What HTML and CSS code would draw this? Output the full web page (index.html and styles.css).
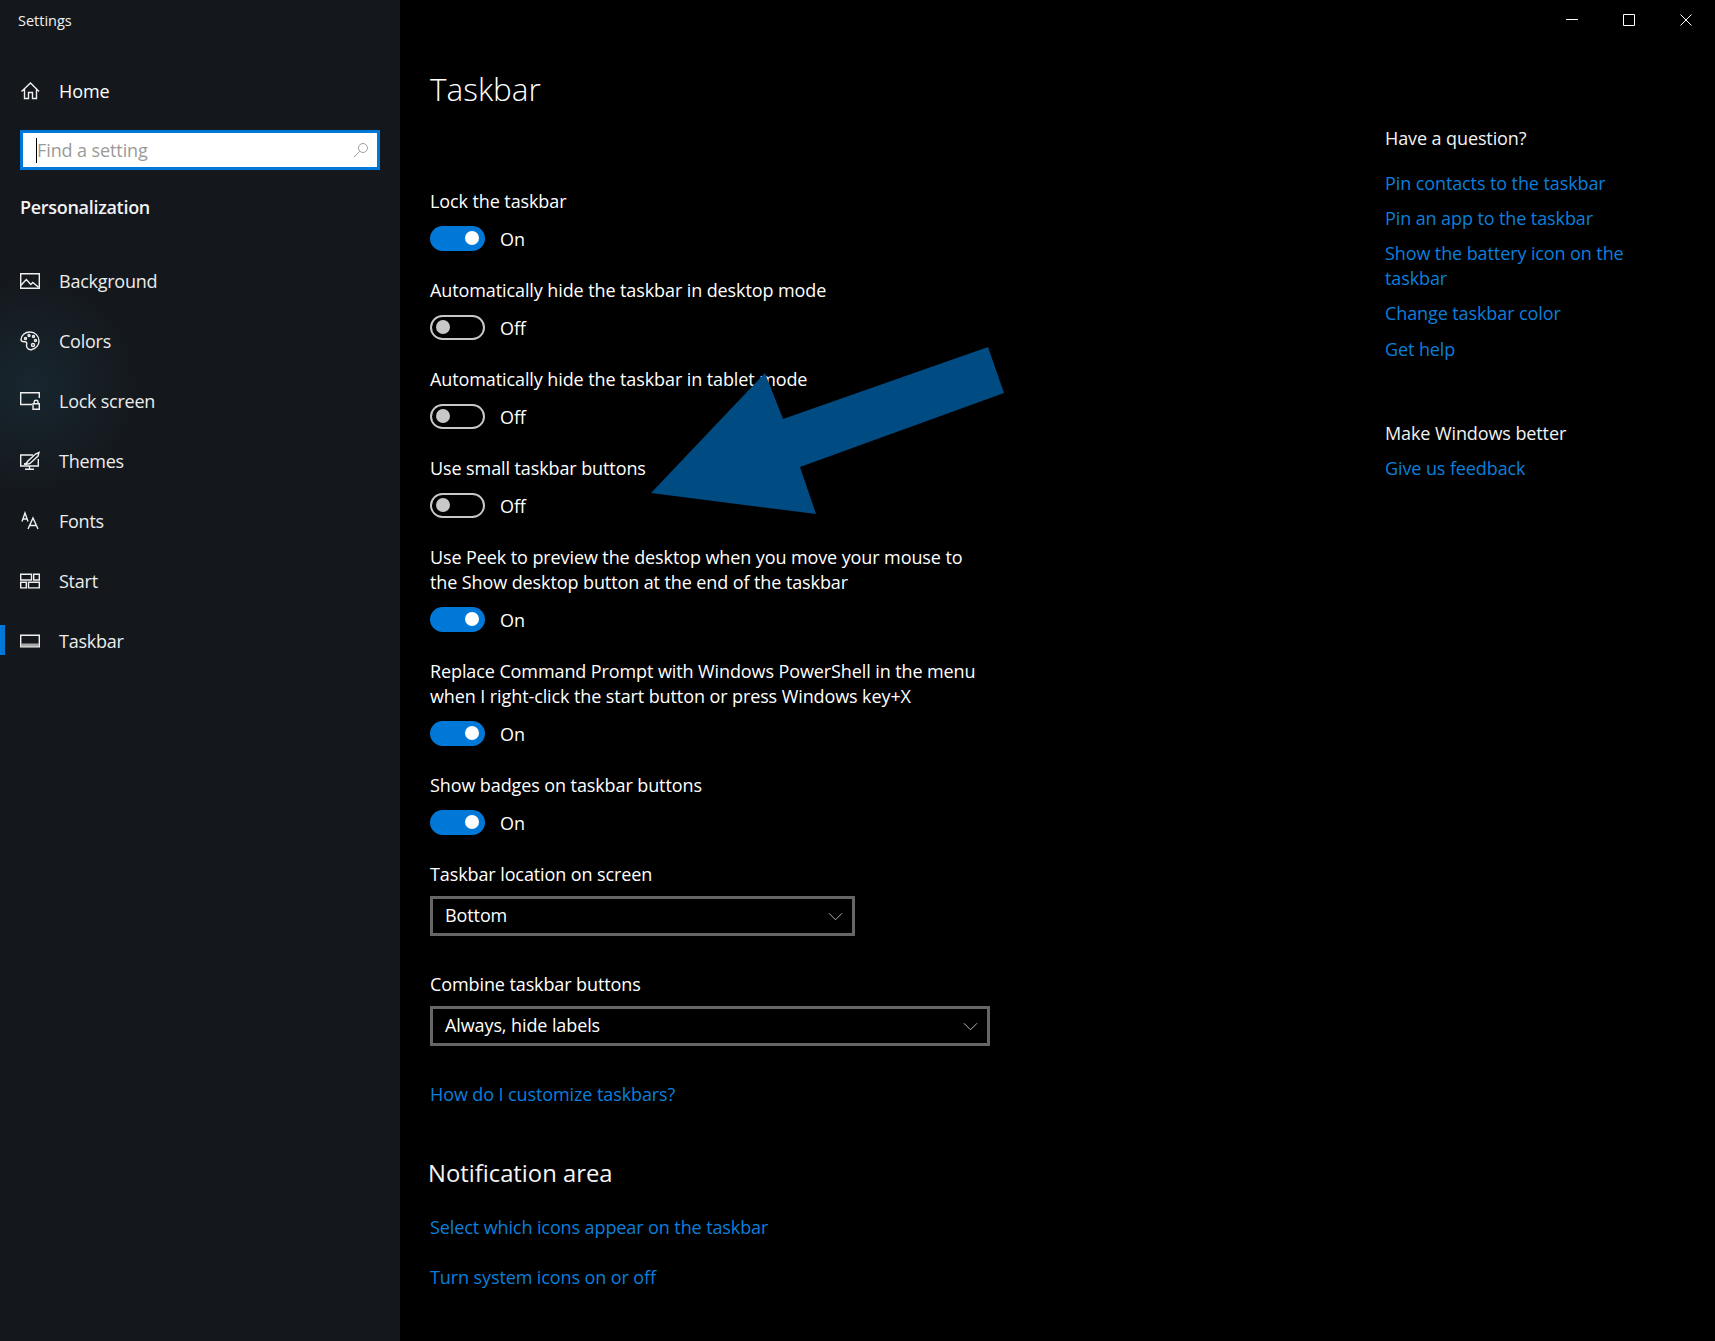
FILE: index.html
```html
<!DOCTYPE html>
<html lang="en">
<head>
<meta charset="utf-8">
<title>Settings</title>
<link rel="stylesheet" href="styles.css">
</head>
<body>
<div class="app">
  <aside class="sidebar">
    <div class="app-title">Settings</div>
    <a class="home">
      <svg class="icon" viewBox="0 0 20 20"><path d="M1.500 10.500 10.500 2l8.500 8.500M4.500 8v9.500h4v-6h4v6h4V8"/></svg>
      <span>Home</span>
    </a>
    <div class="search">
      <span class="caret"></span><span class="placeholder">Find a setting</span>
      <svg class="search-icon" viewBox="0 0 16 16"><circle cx="10" cy="6" r="4.500"/><path d="M6.800 9.200 1 15"/></svg>
    </div>
    <div class="section">Personalization</div>
    <nav class="nav">
      <a class="nav-item">
        <svg class="icon" viewBox="0 0 20 16"><path d="M.7.700h18.600v14.600H.7zM.8 12.500l5.500-6 4.500 5 2-2 5.500 4.500M13.500 4.500h.1"/></svg>
        <span>Background</span>
      </a>
      <a class="nav-item">
        <svg class="icon" viewBox="0 0 20 20"><path d="M10 1C5 1 1 4.500 1 8.500c0 3 3.500 2 5 2.500 2 .7-.5 3 1 5.500 1 2 3 2.500 5 2 4-1 7-4.500 7-8.500C19 5 15 1 10 1z"/><circle cx="5.500" cy="7.500" r="1"/><circle cx="9" cy="4.500" r="1"/><circle cx="13.500" cy="5.500" r="1"/><circle cx="15.500" cy="9.500" r="1"/><circle cx="13" cy="14" r="1.500"/></svg>
        <span>Colors</span>
      </a>
      <a class="nav-item">
        <svg class="icon" viewBox="0 0 20 18"><path d="M12 12.500H.7V.7h18.600V6M13 17.300h6.300v-5.500H13zM14.200 11.800V9.800c0-2 3.800-2 3.800 0v2"/></svg>
        <span>Lock screen</span>
      </a>
      <a class="nav-item">
        <svg class="icon" viewBox="0 0 20 18"><path d="M13 3H.7v11h17.600V7M9.500 14v3M5 17.300h9"/><path d="M4 12c2.500 0 3-1 3.500-2.500L15.500 2 19 .5 18 4l-8 7.500C8.500 12 6 12.500 4 12z"/></svg>
        <span>Themes</span>
      </a>
      <a class="nav-item">
        <svg class="icon" viewBox="0 0 20 18"><path d="M2 9.500 5 1l3 8.500M3 7h4M8 17 13 6l5 11M9.700 13.500h6.600"/></svg>
        <span>Fonts</span>
      </a>
      <a class="nav-item">
        <svg class="icon" viewBox="0 0 20 15"><path d="M.7.700h10.800v5.800H.7zM13.700.700h5.600v5.800h-5.600zM.7 8.800h5.600v5.600H.7zM8.500 8.800h10.800v5.600H8.500z"/></svg>
        <span>Start</span>
      </a>
      <a class="nav-item active">
        <svg class="icon" viewBox="0 0 20 13"><path d="M.7.700h18.600v11.600H.7z"/><path class="thick" d="M1 10.500h18"/></svg>
        <span>Taskbar</span>
      </a>
    </nav>
  </aside>

  <main class="main">
    <div class="window-controls">
      <svg viewBox="0 0 12 12"><path d="M0 5.500h12"/></svg>
      <svg viewBox="0 0 12 12"><path d="M.5.500h11v11H.5z"/></svg>
      <svg viewBox="0 0 12 12"><path d="M.5.500l11 11M11.500.500l-11 11"/></svg>
    </div>
    <div class="columns">
      <section class="content">
        <h1 class="page-title">Taskbar</h1>

        <div class="setting">
          <div class="label">Lock the taskbar</div>
          <div class="toggle-row"><span class="toggle on"></span><span class="state">On</span></div>
        </div>
        <div class="setting">
          <div class="label">Automatically hide the taskbar in desktop mode</div>
          <div class="toggle-row"><span class="toggle"></span><span class="state">Off</span></div>
        </div>
        <div class="setting">
          <div class="label">Automatically hide the taskbar in tablet mode</div>
          <div class="toggle-row"><span class="toggle"></span><span class="state">Off</span></div>
        </div>
        <div class="setting">
          <div class="label">Use small taskbar buttons</div>
          <div class="toggle-row"><span class="toggle"></span><span class="state">Off</span></div>
        </div>
        <div class="setting">
          <div class="label">Use Peek to preview the desktop when you move your mouse to<br>the Show desktop button at the end of the taskbar</div>
          <div class="toggle-row"><span class="toggle on"></span><span class="state">On</span></div>
        </div>
        <div class="setting">
          <div class="label">Replace Command Prompt with Windows PowerShell in the menu<br>when I right-click the start button or press Windows key+X</div>
          <div class="toggle-row"><span class="toggle on"></span><span class="state">On</span></div>
        </div>
        <div class="setting">
          <div class="label">Show badges on taskbar buttons</div>
          <div class="toggle-row"><span class="toggle on"></span><span class="state">On</span></div>
        </div>

        <div class="setting select-setting">
          <div class="label">Taskbar location on screen</div>
          <div class="select short"><span class="select-text">Bottom</span><svg viewBox="0 0 16 9"><path d="M1 1l7 7 7-7"/></svg></div>
        </div>
        <div class="setting select-setting">
          <div class="label">Combine taskbar buttons</div>
          <div class="select wide"><span class="select-text">Always, hide labels</span><svg viewBox="0 0 16 9"><path d="M1 1l7 7 7-7"/></svg></div>
        </div>

        <a class="link customize">How do I customize taskbars?</a>
        <h2 class="sub-title">Notification area</h2>
        <a class="link notif-a">Select which icons appear on the taskbar</a>
        <a class="link notif-b">Turn system icons on or off</a>
      </section>

      <aside class="help">
        <div class="help-title">Have a question?</div>
        <ul class="help-links">
          <li><a class="link">Pin contacts to the taskbar</a></li>
          <li><a class="link">Pin an app to the taskbar</a></li>
          <li><a class="link">Show the battery icon on the<br>taskbar</a></li>
          <li class="change-color"><a class="link">Change taskbar color</a></li>
          <li><a class="link">Get help</a></li>
        </ul>
        <div class="help-title better">Make Windows better</div>
        <a class="link feedback">Give us feedback</a>
      </aside>
    </div>
    <svg class="arrow" viewBox="0 0 370 200"><polygon points="337,17 353,63 149,137 165,184 0,163 114,43 132,89"/></svg>
  </main>
</div>
</body>
</html>
```
FILE: styles.css
```css
* { box-sizing: border-box; }
html, body { height: 100%; }
body {
  margin: 0;
  background: #000;
  color: #fff;
  font-family: "Open Sans", "Noto Sans", sans-serif;
  font-size: 18px;
  letter-spacing: -0.1px;
  line-height: 25px;
  overflow: hidden;
}
a { display: block; }
.app { display: flex; height: 1341px; }

.sidebar {
  width: 400px;
  flex: none;
  padding: 9px 0 0;
  background:
    radial-gradient(circle at 30px 385px, #18262f 0, rgba(24, 38, 47, 0) 110px),
    #14181c;
}
.app-title { padding-left: 18px; font-size: 14.500px; line-height: 24px; letter-spacing: 0; color: #f0f0f0; }
.home { display: flex; align-items: center; height: 30px; margin-top: 43px; padding-left: 20px; gap: 19px; }
.icon { width: 20px; height: 20px; flex: none; fill: none; stroke: #efefef; stroke-width: 1.400; margin-top: -1px; }
.icon .thick { stroke-width: 3; stroke: #aaa; }
.search {
  display: flex;
  align-items: center;
  height: 40px;
  margin: 24px 20px 0;
  padding: 0 8px 0 13px;
  background: #fff;
  border: 3px solid #0078d7;
}
.caret { width: 1px; height: 25px; background: #000; flex: none; }
.placeholder { flex: 1; color: #9a9a9a; }
.search-icon { width: 16px; height: 16px; fill: none; stroke: #a0a0a0; stroke-width: 1; }
.section { padding-left: 20px; margin-top: 25px; font-weight: 600; letter-spacing: -0.3px; color: #f2f2f2; }
.nav { margin-top: 31px; }
.nav-item { display: flex; align-items: center; height: 60px; padding-left: 20px; gap: 19px; position: relative; color: #ececec; letter-spacing: -0.25px; }
.nav-item.active::before {
  content: "";
  position: absolute;
  left: 0;
  top: 14px;
  width: 5px;
  height: 30px;
  background: #0078d7;
}

.main { flex: 1; position: relative; min-width: 0; }
.window-controls { position: absolute; top: 14px; right: 23px; display: flex; gap: 45px; }
.window-controls svg { width: 12px; height: 12px; fill: none; stroke: #fff; stroke-width: 1; display: block; }
.columns { display: flex; }
.content { width: 985px; padding: 64px 0 0 30px; flex: none; }
.page-title { margin: 0 0 74px; font-size: 31.500px; line-height: 50px; font-weight: 300; letter-spacing: 0; color: #fff; }
.setting { margin-bottom: 26.500px; }
.label { padding-top: 1px; }
.toggle-row { display: flex; align-items: center; gap: 15px; margin-top: 11.500px; height: 25px; }
.state { padding-top: 2px; }
.toggle {
  width: 55px;
  height: 25px;
  border-radius: 13px;
  border: 2px solid #c8c8c8;
  display: flex;
  align-items: center;
  padding: 0 4px;
  flex: none;
}
.toggle::after { content: ""; width: 14px; height: 14px; border-radius: 50%; background: #c8c8c8; }
.toggle.on { background: #0078d7; border-color: #0078d7; justify-content: flex-end; }
.toggle.on::after { background: #fff; }
.select-setting { margin-bottom: 0; }
.select {
  display: flex;
  align-items: center;
  justify-content: space-between;
  height: 40px;
  margin-top: 9px;
  padding: 0 9px 0 12px;
  border: 3px solid #666;
}
.select-text { margin-top: -2px; }
.select svg { width: 15px; height: 9px; fill: none; stroke: #bdbdbd; stroke-width: 1; }
.short { width: 425px; margin-bottom: 35px; }
.wide { width: 560px; }
.link { color: #0a7fdc; }
.customize { margin-top: 36px; }
.sub-title { margin: 49px 0 0 -2px; font-size: 23.800px; line-height: 35px; font-weight: 400; letter-spacing: 0; color: #f5f5f5; }
.notif-a { margin-top: 24px; }
.notif-b { margin-top: 25px; }

.help { padding: 126px 0 0 0; width: 290px; }
.help-title { color: #f2f2f2; }
.help-links { list-style: none; margin: 20px 0 0; padding: 0; }
.help-links li { margin-bottom: 10px; }
.help-links .change-color { margin-bottom: 11px; }
.better { margin-top: 59px; }
.feedback { margin-top: 10px; }

.arrow { position: absolute; left: 251px; top: 330px; width: 370px; height: 200px; }
.arrow polygon { fill: #004b82; }
```
